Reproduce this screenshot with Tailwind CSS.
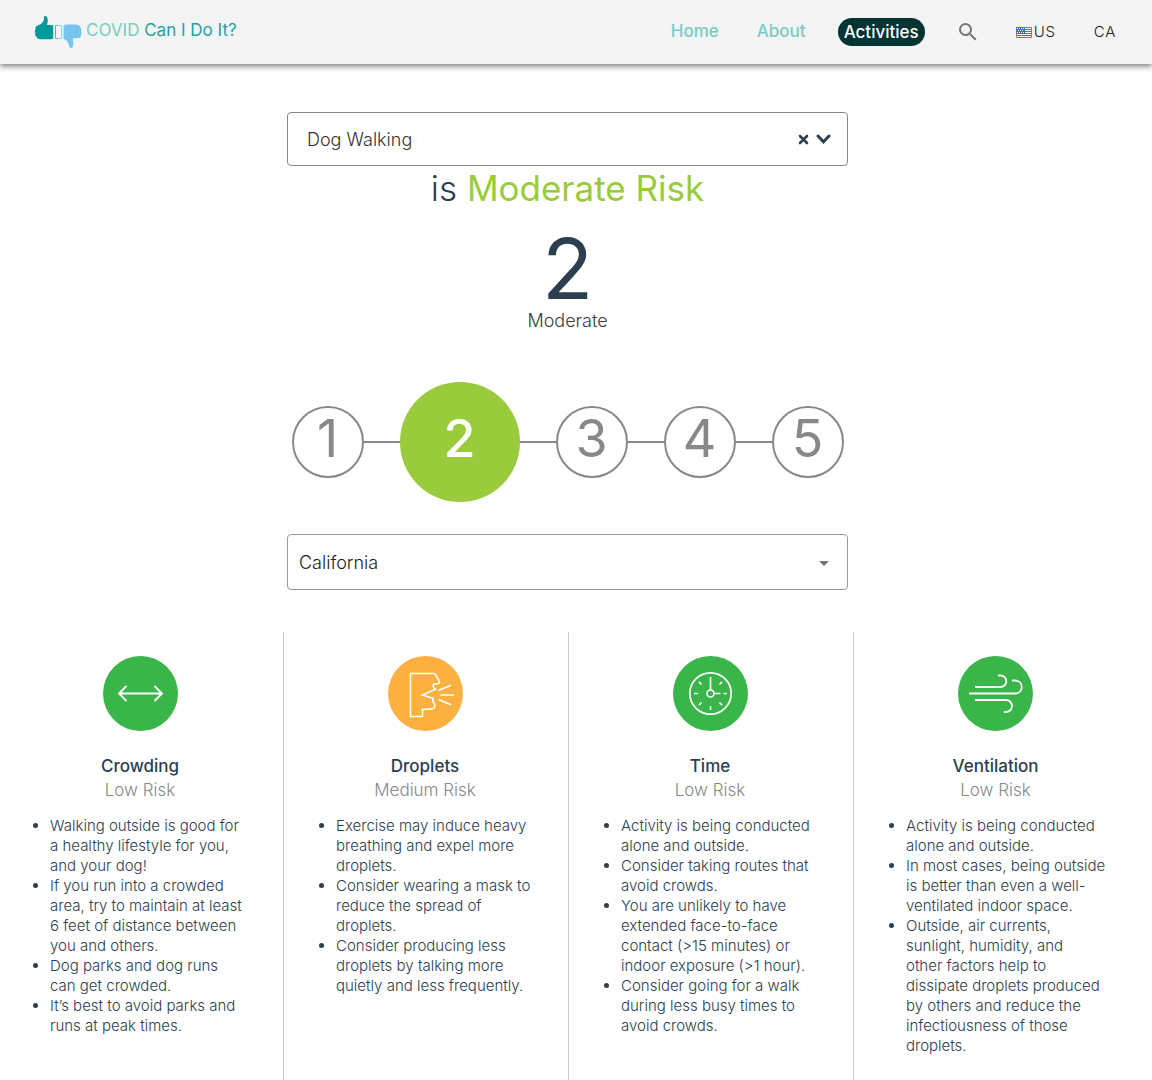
<!DOCTYPE html>
<html lang="en">
<head>
<meta charset="utf-8">
<meta name="viewport" content="width=device-width, initial-scale=1">
<title>COVID Can I Do It?</title>
<script src="https://cdn.jsdelivr.net/npm/@tailwindcss/browser@4"></script>
</head>
<body class="min-h-screen flex flex-col bg-white font-['Inter',sans-serif] text-[#2c3e50] overflow-x-hidden">
<header class="relative h-16 shrink-0 bg-[#f4f4f4] shadow-[0_2px_6px_rgba(0,0,0,0.55)] flex items-center justify-between pl-[34px] pr-9">
  <a href="#" class="flex items-center gap-1 text-[17px] text-[#1ca3a1]">
    <svg class="w-12 h-8" viewBox="0 0 48 32" aria-hidden="true">
      <path fill="#009999" d="M11 0c2 0 2.800 1.800 2.800 4.500 0 1.800-.8 3.500-.6 4.500l6 .3V22.500l-2 .8H7c-3 0-4.500-1-4.500-2.800C1 20 .8 18.500 1.500 17 .6 16 .6 14.300 1.500 13.500 1 11.300 2 10 4 9.500c2.500-1 5.600-3.200 6-6 0-1.500-.3-3.500 1-3.500z"/>
      <path fill="#74c6ef" d="M29.500 9.500l2-1h9c3.500-.2 5.500.8 5.500 2.500 1.500 1 1.600 2.500 1 3.800.8 1.300.7 2.700 0 3.700.4 2.500-1 3.500-3 3.500l-5 .3c-.4 1.300.3 3 .3 5 0 3-.5 4.700-2.500 4.700-1.500 0-1.700-2-2-3.700-1-2.500-3-5-5.300-5.500z"/>
      <path fill="none" stroke="#57b5b0" d="M24 9.500h-2.500v13H24"/>
      <path fill="none" stroke="#8fcdec" d="M25 9.500h2.500v13H25"/>
    </svg>
    <span class="pb-0.5"><span class="text-[#76cdc0]">COVID</span> Can I Do It?</span>
  </a>
  <nav class="flex items-center text-[17px] font-medium text-[#76cdc4]">
    <a href="#" class="mr-[38px]">Home</a>
    <a href="#" class="mr-8">About</a>
    <a href="#" class="rounded-full bg-[#003333] text-white px-[6px] h-7 leading-7">Activities</a>
    <button type="button" aria-label="Search" class="ml-[31px] mr-9">
      <svg class="w-6 h-6" viewBox="0 0 24 24" fill="#757575"><path d="M15.500 14h-.79l-.28-.27A6.471 6.471 0 0 0 16 9.500 6.500 6.500 0 1 0 9.500 16c1.610 0 3.090-.59 4.230-1.570l.27.28v.79l5 4.990L20.490 19l-4.990-5zm-6 0C7.010 14 5 11.990 5 9.500S7.010 5 9.500 5 14 7.010 14 9.500 11.990 14 9.500 14z"/></svg>
    </button>
    <button type="button" class="flex items-center mr-[38px] text-[15px] font-light tracking-wider text-[#222]">
      <svg class="w-4 h-[11px] mr-0.5" viewBox="0 0 16 11" aria-hidden="true">
        <rect width="16" height="11" fill="#fff"/>
        <path stroke="#f0402f" d="M0 2.500h16M0 4.500h16M0 6.500h16M0 8.500h16"/>
        <rect width="9" height="7" fill="#2f6fd0"/>
        <path stroke="#fff" stroke-dasharray="1 1" d="M1 1.500h7M2 3.500h6M1 5.500h7"/>
        <path fill="none" stroke="#c06a50" d="M9 .5h6.500v10H.5V7"/>
        <path fill="none" stroke="#5a6fb0" d="M.5 7V.5H9"/>
      </svg>US</button>
    <button type="button" class="text-[15px] font-light tracking-wider text-[#222]">CA</button>
  </nav>
</header>

<main class="flex-1 flex flex-col pt-12 pr-[17px]">
  <section class="w-full max-w-[561px] mx-auto flex flex-col items-center">
    <div class="w-full h-[54px] border border-[#888] rounded flex items-center pl-[19px] pr-4">
      <input type="text" aria-label="Activity" value="Dog Walking" class="flex-1 min-w-0 text-[18px] font-light text-[#333] outline-none">
      <button type="button" aria-label="Clear" class="mr-[7px]">
        <svg class="w-[11px] h-[11px]" viewBox="0 0 11 11" fill="none" stroke="#2c3e50" stroke-width="2.600" stroke-linecap="round"><path d="M2 2l7 7M9 2l-7 7"/></svg>
      </button>
      <button type="button" aria-label="Open list">
        <svg class="w-[15px] h-[11px]" viewBox="0 0 15 11" fill="none" stroke="#2c3e50" stroke-width="3" stroke-linecap="round"><path d="M2 2l5.500 5.800L13 2"/></svg>
      </button>
    </div>
    <h1 class="text-[35px] leading-[44px] font-light">is <span class="text-[#9acb3c] font-normal">Moderate Risk</span></h1>
    <p class="mt-[17px] text-[84px] leading-[84px]">2</p>
    <p class="text-[18px] leading-5 font-light">Moderate</p>
    <ol class="mt-[51px] flex items-center text-[52px] text-[#888]">
      <li class="size-[72px] rounded-full border-2 border-[#888] flex items-center justify-center pb-1.5">1</li>
      <li class="w-9 h-0.5 bg-[#888]" aria-hidden="true"></li>
      <li class="size-[120px] rounded-full bg-[#9acb3c] text-white font-medium flex items-center justify-center pb-1.5" aria-current="step">2</li>
      <li class="w-9 h-0.5 bg-[#888]" aria-hidden="true"></li>
      <li class="size-[72px] rounded-full border-2 border-[#888] flex items-center justify-center pb-1.5">3</li>
      <li class="w-9 h-0.5 bg-[#888]" aria-hidden="true"></li>
      <li class="size-[72px] rounded-full border-2 border-[#888] flex items-center justify-center pb-1.5">4</li>
      <li class="w-9 h-0.5 bg-[#888]" aria-hidden="true"></li>
      <li class="size-[72px] rounded-full border-2 border-[#888] flex items-center justify-center pb-1.5">5</li>
    </ol>
    <div class="relative mt-8 w-full">
      <select aria-label="State" class="block appearance-none w-full h-14 border border-[#999] rounded pl-[11px] pr-10 text-[18px] font-light text-[#222] bg-white"><option>California</option></select>
      <svg class="absolute right-3 top-4 w-6 h-6 pointer-events-none" viewBox="0 0 24 24" fill="#757575" aria-hidden="true"><path d="M7 11l5 5 5-5z"/></svg>
    </div>
  </section>

  <section class="flex-1 mt-[42px] -ml-px -mr-1 grid grid-cols-4 divide-x divide-[#ccc]">
    <article class="pt-6 pb-6 pr-0.5 flex flex-col items-center">
      <svg class="size-[75px]" viewBox="0 0 75 75" fill="none" stroke="#fff" stroke-width="1.800" aria-hidden="true"><circle cx="37.500" cy="37.500" r="37.500" fill="#39b54a" stroke="none"/><path d="M16 37.500h43M23.500 30l-7.500 7.500 7.500 7.500M51.500 30l7.500 7.500-7.500 7.500"/></svg>
      <h2 class="mt-[23px] text-[17px] leading-6 font-medium">Crowding</h2>
      <p class="text-[17px] leading-6 font-light text-[#888]">Low Risk</p>
      <ul class="mt-[14px] self-stretch list-disc pl-[51px] pr-[26px] text-[15px] leading-5 font-light">
        <li>Walking outside is good for a&nbsp;healthy lifestyle for you, and&nbsp;your dog!</li>
        <li>If you run into a crowded area, try to maintain at least 6&nbsp;feet of distance between you and others.</li>
        <li>Dog parks and dog runs can&nbsp;get crowded.</li>
        <li>It’s best to avoid parks and runs at peak times.</li>
      </ul>
    </article>
    <article class="pt-6 pb-6 pr-0.5 flex flex-col items-center">
      <svg class="size-[75px]" viewBox="0 0 75 75" fill="none" stroke="#fff" stroke-width="1.600" aria-hidden="true"><circle cx="37.500" cy="37.500" r="37.500" fill="#fbb040" stroke="none"/><path d="M22.500 17.500H46q1.500 0 2 2l3 5q.8 2-.5 3l-5 .7q-1 3.500 2 5L34.500 39l10.500 3.300q-1 3 1.500 5.200 1 2.500-.5 4.500-1.500 1.500-4 1l-7.500.5v7H22.500zM50.500 34.500l12.500-5.300M52.500 39H66M50.500 43.500l12.500 5.300"/></svg>
      <h2 class="mt-[23px] text-[17px] leading-6 font-medium">Droplets</h2>
      <p class="text-[17px] leading-6 font-light text-[#888]">Medium Risk</p>
      <ul class="mt-[14px] self-stretch list-disc pl-[52px] pr-[26px] text-[15px] leading-5 font-light">
        <li>Exercise may induce heavy breathing and expel more droplets.</li>
        <li>Consider wearing a mask to reduce the spread of droplets.</li>
        <li>Consider producing less droplets by talking more quietly and less frequently.</li>
      </ul>
    </article>
    <article class="pt-6 pb-6 pr-0.5 flex flex-col items-center">
      <svg class="size-[75px]" viewBox="0 0 75 75" fill="none" stroke="#fff" stroke-width="1.700" aria-hidden="true"><circle cx="37.500" cy="37.500" r="37.500" fill="#39b54a" stroke="none"/><circle cx="37.500" cy="37.500" r="20.700"/><circle cx="37.500" cy="37.500" r="3.500"/><path d="M37.500 34V21M41 37.500h6.500M50.500 37.500H54M21 37.500h4M37.500 50v4M46.500 28.500l2.600-2.600M28.500 28.500l-2.600-2.600M28.500 46.500l-2.600 2.600M46.500 46.500l2.600 2.600"/></svg>
      <h2 class="mt-[23px] text-[17px] leading-6 font-medium">Time</h2>
      <p class="text-[17px] leading-6 font-light text-[#888]">Low Risk</p>
      <ul class="mt-[14px] self-stretch list-disc pl-[52px] pr-[26px] text-[15px] leading-5 font-light">
        <li>Activity is being conducted alone and outside.</li>
        <li>Consider taking routes that avoid crowds.</li>
        <li>You are unlikely to have extended face-to-face contact (&gt;15 minutes) or indoor exposure (&gt;1 hour).</li>
        <li>Consider going for a walk during less busy times to avoid crowds.</li>
      </ul>
    </article>
    <article class="pt-6 pb-6 pr-0.5 flex flex-col items-center">
      <svg class="size-[75px]" viewBox="0 0 75 75" fill="none" stroke="#fff" stroke-width="1.800" aria-hidden="true"><circle cx="37.500" cy="37.500" r="37.500" fill="#39b54a" stroke="none"/><path d="M17 31h25.500a5.500 5.500 0 0 0 0-11.500H40M11 37.500h46c9 0 9-13 0-13h-3M17 44h31a5.500 5.500 0 0 1 0 12h-2"/></svg>
      <h2 class="mt-[23px] text-[17px] leading-6 font-medium">Ventilation</h2>
      <p class="text-[17px] leading-6 font-light text-[#888]">Low Risk</p>
      <ul class="mt-[14px] self-stretch list-disc pl-[52px] pr-[26px] text-[15px] leading-5 font-light">
        <li>Activity is being conducted alone and outside.</li>
        <li>In most cases, being outside is better than even a well-ventilated indoor space.</li>
        <li>Outside, air currents, sunlight, humidity, and other&nbsp;factors help to dissipate&nbsp;droplets produced by&nbsp;others and reduce the infectiousness of those droplets.</li>
      </ul>
    </article>
  </section>
</main>
</body>
</html>
